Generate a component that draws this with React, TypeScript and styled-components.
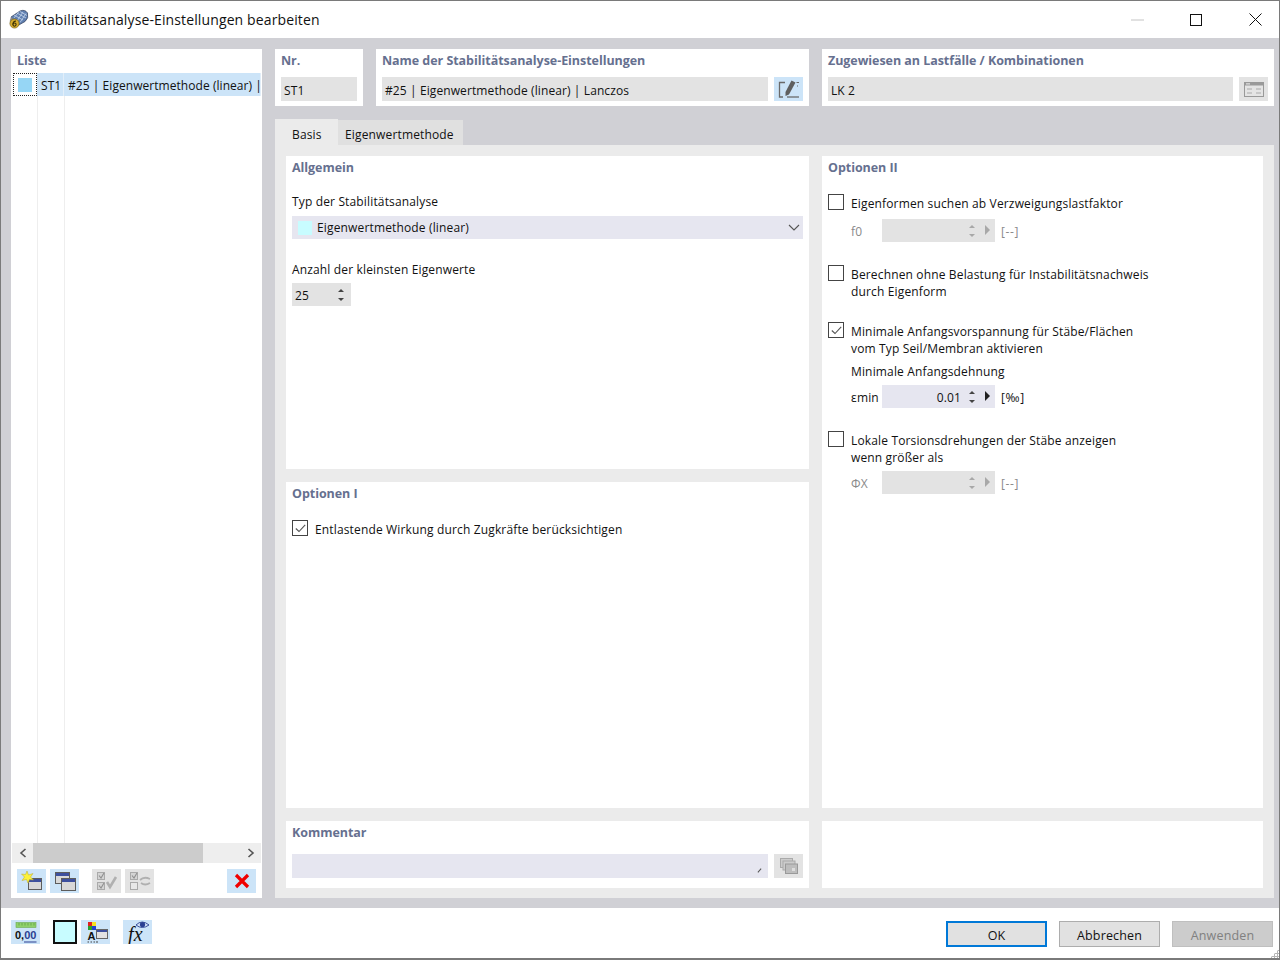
import styled, { createGlobalStyle } from 'styled-components';
import type { ReactNode } from 'react';

const GlobalStyle = createGlobalStyle`
	*, *::before, *::after {
		box-sizing: border-box;
	}
	html, body {
		margin: 0;
		padding: 0;
		background: #fff;
	}
	body {
		font-family: 'Open Sans', 'Noto Sans', sans-serif;
		font-size: 12px;
		letter-spacing: 0.15px;
		color: #1a1a1a;
	}
`;

const AppIcon = () => (
	<svg width="21" height="21" viewBox="0 0 21 21">
		<path d="M3 8 L12 2 Q17 0 19.5 4 Q21 9 17 12.5 L9 17 Z" fill="#5f7fb0" stroke="#3c4a66" strokeWidth="0.8" />
		<path d="M6 6 L15 11 M9 4 L18 9 M12 2.5 L19 6.5 M9 12 L15 3 M12 13.5 L18 4.5 M6 9 L11 2.5" stroke="#c3d3ea" strokeWidth="0.8" />
		<path d="M3 8 Q1 11 2 15 L9 17 Q8 12 3 8 Z" fill="#8d8d8d" />
		<circle cx="6.5" cy="14.5" r="4.6" fill="#d6ab2c" stroke="#6d5a12" strokeWidth="0.6" />
		<circle cx="6.5" cy="15.6" r="1.6" fill="none" stroke="#3b3206" strokeWidth="1.1" />
		<path d="M4.9 15.4 Q5 12.2 8 12" fill="none" stroke="#3b3206" strokeWidth="1.1" />
	</svg>
);

const MiniWindow = ({ x, y, w, h }: { x: number; y: number; w: number; h: number }) => (
	<g>
		<rect x={x} y={y} width={w} height={h} fill="#d8d8d8" stroke="#5c5c5c" />
		<rect x={x + 0.5} y={y + 0.5} width={w - 1} height="3" fill="#3c4f9e" />
	</g>
);

const NewIcon = () => (
	<svg width="22" height="20" viewBox="0 0 22 20">
		<MiniWindow x={7.5} y={7.5} w={13} h={11} />
		<path d="M6 0 L7.5 4 L12 2.5 L9.5 6 L12.5 9 L8.5 8.5 L7 12 L5.5 8.5 L1 9.5 L3.5 6 L0.5 3 L4.5 3.5 Z" fill="#fdf23a" stroke="#b9a92a" strokeWidth="0.5" />
	</svg>
);

const CopyIcon = () => (
	<svg width="22" height="20" viewBox="0 0 22 20">
		<MiniWindow x={1.5} y={1.5} w={14} h={11} />
		<MiniWindow x={7.5} y={7.5} w={14} h={12} />
	</svg>
);

const CheckAllIcon = () => (
	<svg width="22" height="20" viewBox="0 0 22 20" fill="none">
		<rect x="1.5" y="1.5" width="7" height="7" fill="#d4d4d4" stroke="#aaa" />
		<rect x="1.5" y="11.5" width="7" height="7" fill="#d4d4d4" stroke="#aaa" />
		<path d="M3 4.5 L5 7 L8 2 M3 14.5 L5 17 L8 12" stroke="#8f8f8f" strokeWidth="1.1" />
		<path d="M11 11 L14 16 L20 6" stroke="#b0b0b0" strokeWidth="2.6" />
	</svg>
);

const SwapCheckIcon = () => (
	<svg width="22" height="20" viewBox="0 0 22 20" fill="none">
		<rect x="1.5" y="1.5" width="7" height="7" fill="#d4d4d4" stroke="#aaa" />
		<rect x="1.5" y="11.5" width="7" height="7" fill="#e8e8e8" stroke="#aaa" />
		<path d="M3 4.5 L5 7 L8 2" stroke="#8f8f8f" strokeWidth="1.1" />
		<path d="M11 9 Q15 5 21 8 M21 12 Q16 15 12 12" stroke="#b0b0b0" strokeWidth="1.8" />
	</svg>
);

const DeleteIcon = () => (
	<svg width="16" height="16" viewBox="0 0 16 16">
		<path d="M2 2 L14 14 M14 2 L2 14" stroke="#f00000" strokeWidth="3.2" />
	</svg>
);

const EditIcon = () => (
	<svg width="22" height="20" viewBox="0 0 22 20" fill="none">
		<path d="M7 3.5 H1.5 V18 H5" stroke="#6a6a6a" strokeWidth="1.3" />
		<path d="M9 18 H21" stroke="#6a6a6a" strokeWidth="1.3" />
		<path d="M13.5 1.5 L17.5 3.5 L11 15.5 L7.5 17 L7.5 13 Z" fill="#5f5f5f" />
		<path d="M18.5 3.5 H21 M19 7 H20" stroke="#6a6a6a" strokeWidth="1" />
	</svg>
);

const FormIcon = () => (
	<svg width="20" height="15" viewBox="0 0 20 15">
		<rect x="0.5" y="0.5" width="19" height="14" fill="#e4e4e4" stroke="#999" />
		<rect x="1" y="1" width="18" height="2.5" fill="#9a9a9a" />
		<rect x="2" y="1.4" width="4" height="1" fill="#eee" />
		<path d="M3 7 H8 M12 7 H17 M3 11 H8 M12 11 H17" stroke="#aaa" strokeWidth="1" />
	</svg>
);

const CascadeIcon = () => (
	<svg width="18" height="16" viewBox="0 0 18 16">
		<rect x="0.5" y="0.5" width="12" height="9" fill="#ccc" stroke="#aaa" />
		<rect x="3" y="3" width="12" height="9" fill="#ccc" stroke="#aaa" />
		<rect x="5.5" y="6" width="12" height="9.5" fill="#bdbdbd" stroke="#999" />
		<rect x="12" y="10" width="3" height="3" fill="#ddd" />
	</svg>
);

const DecimalIcon = () => (
	<svg width="22" height="21" viewBox="0 0 22 21">
		<rect x="1" y="0.5" width="20" height="5" fill="#8fd16a" stroke="#6aa84f" strokeWidth="0.6" />
		<path d="M4 1 V3.5 M7 1 V3.5 M10 1 V3.5 M13 1 V3.5 M16 1 V3.5 M19 1 V3.5" stroke="#5a9a40" strokeWidth="0.7" />
		<text x="0" y="17" fontSize="11" fontWeight="700" letterSpacing="0" fill="#111" fontFamily="Liberation Sans, sans-serif">0,</text>
		<text x="9.2" y="17" fontSize="11" fontWeight="700" letterSpacing="0" fill="#2a3f92" fontFamily="Liberation Sans, sans-serif">00</text>
		<path d="M9 20 H21.5" stroke="#2a3f92" strokeWidth="1" />
	</svg>
);

const ColorLabelIcon = () => (
	<svg width="24" height="21" viewBox="0 0 24 21">
		<rect x="4" y="0" width="4" height="4" fill="#e02020" />
		<rect x="8" y="0" width="4" height="4" fill="#f5e020" />
		<rect x="4" y="4" width="4" height="4" fill="#2aa02a" />
		<rect x="8" y="4" width="4" height="4" fill="#2040d0" />
		<text x="3.5" y="18" fontSize="11" fontWeight="700" fill="#111" fontFamily="Liberation Sans, sans-serif">A</text>
		<path d="M3.5 20 H5 M6.5 20 H8 M9.5 20 H11 M12 20 H14" stroke="#444" strokeWidth="1.2" />
		<rect x="12.5" y="7.5" width="11" height="9" fill="#e2e2e2" stroke="#666" />
		<rect x="13" y="8" width="10" height="2" fill="#3c4f9e" />
	</svg>
);

const FormulaIcon = () => (
	<svg width="26" height="24" viewBox="0 0 26 24">
		<text x="3" y="21" fontSize="20" fontStyle="italic" fill="#111" fontFamily="Liberation Serif, serif">fx</text>
		<path d="M11 5 Q17 -1 24 5 Q17 10 11 5 Z" fill="#cfe0f5" stroke="#2a3f92" strokeWidth="0.9" />
		<circle cx="17.5" cy="4.5" r="2.6" fill="#2a3f92" />
	</svg>
);

const Window = styled.div`
	position: relative;
	width: 1280px;
	height: 960px;
	display: flex;
	flex-direction: column;
	background: #fff;
	border: 1px solid #7a7a7a;
	border-bottom-width: 2px;
`;

const TitleBar = styled.div`
	height: 37px;
	flex: none;
	display: flex;
	align-items: center;
	padding-left: 7px;
	gap: 5px;
`;

const TitleText = styled.div`
	flex: 1;
	font-size: 14px;
	letter-spacing: 0.12px;
	color: #111;
`;

const WindowButtons = styled.div`
	display: flex;
	align-items: center;
	gap: 45px;
	padding-right: 17px;
`;

const WindowButton = styled.div`
	width: 14px;
	display: flex;
	justify-content: center;
`;

const Main = styled.div`
	flex: 1;
	min-height: 0;
	background: #d0d0d5;
	display: grid;
	grid-template-columns: 251px 999px;
	column-gap: 13px;
	padding: 11px 0 10px 10px;
`;

const ListPanel = styled.div`
	background: #fff;
	display: flex;
	flex-direction: column;
	min-height: 0;
`;

const Heading = styled.div`
	font-weight: 700;
	font-size: 12.5px;
	letter-spacing: -0.05px;
	line-height: 17px;
	color: #66708f;
`;

const ListHeading = styled(Heading)`
	padding: 3px 6px 4px;
`;

const TreeArea = styled.div`
	flex: 1;
	min-height: 0;
	margin-left: 2px;
	background:
		linear-gradient(#eeeeee, #eeeeee) 24px 0 / 1px 100% no-repeat,
		linear-gradient(#eeeeee, #eeeeee) 51px 0 / 1px 100% no-repeat;
`;

const TreeRow = styled.div`
	height: 23px;
	display: flex;
	align-items: center;
	overflow: hidden;
	white-space: nowrap;
`;

const FocusCell = styled.div`
	width: 24px;
	height: 23px;
	flex: none;
	display: flex;
	align-items: center;
	justify-content: center;
	border: 1px dotted #222;
`;

const Swatch = styled.div<{ $color: string }>`
	width: 14px;
	height: 14px;
	flex: none;
	background: ${p => p.$color};
`;

const TreeCell = styled.div<{ $width: number }>`
	width: ${p => p.$width}px;
	flex: none;
	height: 23px;
	display: flex;
	align-items: center;
	padding: 2px 0 0 4px;
	background: #cce4f8;
	border-right: 1px solid #e2eef9;
	letter-spacing: 0.05px;
	overflow: hidden;
	color: #111;
`;

const ScrollBar = styled.div`
	height: 20px;
	margin: 0 1px;
	display: flex;
	align-items: center;
	background: #eeeeee;
`;

const ScrollArrow = styled.div`
	width: 21px;
	flex: none;
	display: flex;
	justify-content: center;
`;

const ScrollThumb = styled.div`
	width: 170px;
	height: 20px;
	background: #cccccc;
`;

const ScrollRest = styled.div`
	flex: 1;
`;

const ListToolbar = styled.div`
	display: flex;
	align-items: center;
	gap: 4px;
	padding: 6px 6px 5px;
`;

const ToolButton = styled.div<{ $disabled?: boolean; $gapLeft?: number }>`
	width: 29px;
	height: 24px;
	flex: none;
	display: flex;
	align-items: center;
	justify-content: center;
	background: ${p => (p.$disabled ? '#e3e3e3' : '#cce4f8')};
	margin-left: ${p => p.$gapLeft ?? 0}px;
`;

const RightColumn = styled.div`
	display: flex;
	flex-direction: column;
	min-height: 0;
`;

const HeaderRow = styled.div`
	display: grid;
	grid-template-columns: 88px 433px 452px;
	column-gap: 13px;
	height: 57px;
	margin-bottom: 13px;
`;

const HeaderCard = styled.div`
	background: #fff;
	padding: 3px 6px 0;
`;

const HeaderFields = styled.div`
	display: flex;
	gap: 6px;
	margin-top: 8px;
`;

const Field = styled.div<{ $tone?: 'gray' | 'lilac' }>`
	flex: 1;
	height: 24px;
	display: flex;
	align-items: center;
	padding: 2px 0 0 3px;
	background: ${p => (p.$tone === 'lilac' ? '#e6e6f0' : '#e3e3e3')};
	color: #111;
	position: relative;
	letter-spacing: 0.1px;
	white-space: nowrap;
`;

const TabBar = styled.div`
	display: flex;
	height: 26px;
	flex: none;
`;

const Tab = styled.div<{ $active?: boolean }>`
	width: ${p => (p.$active ? '63px' : '125px')};
	height: ${p => (p.$active ? '26px' : '25px')};
	margin-top: ${p => (p.$active ? '0' : '1px')};
	display: flex;
	align-items: center;
	padding: ${p => (p.$active ? '4px' : '3px')} 0 0 ${p => (p.$active ? '17px' : '7px')};
	background: ${p => (p.$active ? '#ebebeb' : '#e0e0e0')};
	color: #111;
`;

const TabBody = styled.div`
	flex: 1;
	min-height: 0;
	background: #ebebeb;
	padding: 11px;
	display: grid;
	grid-template-columns: 523px 441px;
	grid-template-rows: 313px 326px 67px;
	gap: 13px;
`;

const Card = styled.div<{ $span?: number }>`
	background: #fff;
	padding: 3px 6px;
	grid-row: ${p => (p.$span ? `span ${p.$span}` : 'auto')};
`;

const FieldLabel = styled.div<{ $top: number; $bottom: number }>`
	margin: ${p => p.$top}px 0 ${p => p.$bottom}px;
	line-height: 17px;
	color: #111;
`;

const Select = styled.div`
	height: 23px;
	display: flex;
	align-items: center;
	background: #e6e6f0;
	padding: 0 3px 0 6px;
	color: #111;
`;

const SelectText = styled.div`
	flex: 1;
	margin-left: 5px;
`;

const Spin = styled.div<{ $width: number; $lilac?: boolean }>`
	width: ${p => p.$width}px;
	height: 23px;
	flex: none;
	display: flex;
	align-items: center;
	padding: 1px 5px 0 3px;
	background: ${p => (p.$lilac ? '#e6e6f0' : '#e3e3e3')};
	color: #111;
`;

const SpinValue = styled.div<{ $right?: boolean }>`
	flex: 1;
	text-align: ${p => (p.$right ? 'right' : 'left')};
	padding-right: ${p => (p.$right ? '8px' : '0')};
`;

const SpinArrows = styled.div`
	display: flex;
	flex-direction: column;
	gap: 6px;
	margin-right: 2px;
`;

const ArrowUp = styled.div<{ $dim?: boolean }>`
	width: 0;
	height: 0;
	border-left: 3px solid transparent;
	border-right: 3px solid transparent;
	border-bottom: 3px solid ${p => (p.$dim ? '#a8a8a8' : '#444')};
`;

const ArrowDown = styled.div<{ $dim?: boolean }>`
	width: 0;
	height: 0;
	border-left: 3px solid transparent;
	border-right: 3px solid transparent;
	border-top: 3px solid ${p => (p.$dim ? '#a8a8a8' : '#444')};
`;

const ArrowRight = styled.div<{ $dim?: boolean }>`
	width: 0;
	height: 0;
	margin: -2px 0 0 8px;
	border-top: 5px solid transparent;
	border-bottom: 5px solid transparent;
	border-left: 5px solid ${p => (p.$dim ? '#a8a8a8' : '#222')};
`;

const CheckRow = styled.div<{ $top: number }>`
	display: flex;
	align-items: flex-start;
	gap: 7px;
	margin-top: ${p => p.$top}px;
	line-height: 17px;
	color: #111;
`;

const CheckText = styled.div`
	padding-top: 1px;
`;

const Box = styled.div`
	width: 16px;
	height: 16px;
	flex: none;
	border: 1px solid #444;
	background: #fff;
	display: flex;
	align-items: center;
	justify-content: center;
`;

const ParamRow = styled.div<{ $top: number }>`
	display: flex;
	align-items: center;
	margin: ${p => p.$top}px 0 0 23px;
	height: 23px;
`;

const ParamName = styled.div<{ $dim?: boolean }>`
	width: 31px;
	flex: none;
	padding-top: 2px;
	color: ${p => (p.$dim ? '#8a8a8a' : '#111')};
`;

const Unit = styled.div<{ $dim?: boolean }>`
	margin-left: 6px;
	padding-top: 2px;
	letter-spacing: 0.6px;
	color: ${p => (p.$dim ? '#8a8a8a' : '#111')};
`;

const Indented = styled.div`
	margin: 6px 0 0 23px;
	line-height: 17px;
	color: #111;
`;

const CommentRow = styled.div`
	display: flex;
	gap: 6px;
	margin-top: 13px;
`;

const ResizeMark = styled.div`
	position: absolute;
	right: 6px;
	bottom: 7px;
	width: 5px;
	height: 1px;
	background: #555;
	transform: rotate(-50deg);
`;

const Footer = styled.div`
	height: 50px;
	flex: none;
	display: flex;
	align-items: flex-start;
	padding: 12px 6px 0 10px;
`;

const FooterSwatch = styled.div`
	width: 24px;
	height: 24px;
	flex: none;
	margin: 0 4px 0 13px;
	background: #c8fcff;
	border: 2px solid #111;
`;

const FooterSpacer = styled.div`
	flex: 1;
`;

const DialogButton = styled.div<{ $kind?: 'primary' | 'disabled' }>`
	width: 101px;
	height: 26px;
	margin: 1px 0 0 12px;
	display: flex;
	align-items: center;
	justify-content: center;
	padding-top: 2px;
	font-size: 12.5px;
	background: ${p => (p.$kind === 'disabled' ? '#cccccc' : '#e1e1e1')};
	color: ${p => (p.$kind === 'disabled' ? '#808080' : '#111')};
	border: ${p => (p.$kind === 'primary' ? '2px solid #0078d7' : `1px solid ${p.$kind === 'disabled' ? '#bfbfbf' : '#adadad'}`)};
`;

const Grip = styled.div`
	position: absolute;
	right: 0;
	bottom: 0;
	width: 9px;
	height: 9px;
	background-image: radial-gradient(#b5b5b5 1px, transparent 1.2px);
	background-size: 3px 3px;
	clip-path: polygon(100% 0, 100% 100%, 0 100%);
`;

const Checkbox = ({ checked }: { checked?: boolean }) => (
	<Box>
		{checked && (
			<svg width="11" height="9" viewBox="0 0 11 9" fill="none">
				<path d="M0.8 4.5 L4 7.5 L10.2 0.8" stroke="#555" strokeWidth="1.1" />
			</svg>
		)}
	</Box>
);

const SpinField = ({
	width,
	value,
	dim,
	lilac,
	right,
	more,
}: {
	width: number;
	value?: ReactNode;
	dim?: boolean;
	lilac?: boolean;
	right?: boolean;
	more?: boolean;
}) => (
	<Spin $width={width} $lilac={lilac}>
		<SpinValue $right={right}>{value}</SpinValue>
		<SpinArrows>
			<ArrowUp $dim={dim} />
			<ArrowDown $dim={dim} />
		</SpinArrows>
		{more && <ArrowRight $dim={dim} />}
	</Spin>
);

export default function App() {
	return (
		<>
			<GlobalStyle />
			<Window>
				<TitleBar>
					<AppIcon />
					<TitleText>Stabilitätsanalyse-Einstellungen bearbeiten</TitleText>
					<WindowButtons>
						<WindowButton>
							<svg width="13" height="2" viewBox="0 0 13 2">
								<path d="M0 1 H13" stroke="#c4c4c4" />
							</svg>
						</WindowButton>
						<WindowButton>
							<svg width="12" height="12" viewBox="0 0 12 12">
								<rect x="0.5" y="0.5" width="11" height="11" fill="none" stroke="#111" />
							</svg>
						</WindowButton>
						<WindowButton>
							<svg width="13" height="13" viewBox="0 0 13 13">
								<path d="M0.5 0.5 L12.5 12.5 M12.5 0.5 L0.5 12.5" stroke="#111" />
							</svg>
						</WindowButton>
					</WindowButtons>
				</TitleBar>
				<Main>
					<ListPanel>
						<ListHeading>Liste</ListHeading>
						<TreeArea>
							<TreeRow>
								<FocusCell>
									<Swatch $color="#96d6f5" />
								</FocusCell>
								<TreeCell $width={27}>ST1</TreeCell>
								<TreeCell $width={197}>#25 | Eigenwertmethode (linear) |</TreeCell>
							</TreeRow>
						</TreeArea>
						<ScrollBar>
							<ScrollArrow>
								<svg width="8" height="10" viewBox="0 0 8 10" fill="none">
									<path d="M6.5 1 L2 5 L6.5 9" stroke="#555" strokeWidth="1.6" />
								</svg>
							</ScrollArrow>
							<ScrollThumb />
							<ScrollRest />
							<ScrollArrow>
								<svg width="8" height="10" viewBox="0 0 8 10" fill="none">
									<path d="M1.5 1 L6 5 L1.5 9" stroke="#555" strokeWidth="1.6" />
								</svg>
							</ScrollArrow>
						</ScrollBar>
						<ListToolbar>
							<ToolButton><NewIcon /></ToolButton>
							<ToolButton><CopyIcon /></ToolButton>
							<ToolButton $disabled $gapLeft={9}><CheckAllIcon /></ToolButton>
							<ToolButton $disabled><SwapCheckIcon /></ToolButton>
							<ToolButton $gapLeft={69}><DeleteIcon /></ToolButton>
						</ListToolbar>
					</ListPanel>
					<RightColumn>
						<HeaderRow>
							<HeaderCard>
								<Heading>Nr.</Heading>
								<HeaderFields>
									<Field>ST1</Field>
								</HeaderFields>
							</HeaderCard>
							<HeaderCard>
								<Heading>Name der Stabilitätsanalyse-Einstellungen</Heading>
								<HeaderFields>
									<Field>#25 | Eigenwertmethode (linear) | Lanczos</Field>
									<ToolButton><EditIcon /></ToolButton>
								</HeaderFields>
							</HeaderCard>
							<HeaderCard>
								<Heading>Zugewiesen an Lastfälle / Kombinationen</Heading>
								<HeaderFields>
									<Field>LK 2</Field>
									<ToolButton $disabled><FormIcon /></ToolButton>
								</HeaderFields>
							</HeaderCard>
						</HeaderRow>
						<TabBar>
							<Tab $active>Basis</Tab>
							<Tab>Eigenwertmethode</Tab>
						</TabBar>
						<TabBody>
							<Card>
								<Heading>Allgemein</Heading>
								<FieldLabel $top={17} $bottom={6}>Typ der Stabilitätsanalyse</FieldLabel>
								<Select>
									<Swatch $color="#c8fcff" />
									<SelectText>Eigenwertmethode (linear)</SelectText>
									<svg width="12" height="7" viewBox="0 0 12 7" fill="none">
										<path d="M1 1 L6 6 L11 1" stroke="#555" strokeWidth="1.1" />
									</svg>
								</Select>
								<FieldLabel $top={22} $bottom={5}>Anzahl der kleinsten Eigenwerte</FieldLabel>
								<SpinField width={59} value="25" />
							</Card>
							<Card $span={2}>
								<Heading>Optionen II</Heading>
								<CheckRow $top={18}>
									<Checkbox />
									<CheckText>Eigenformen suchen ab Verzweigungslastfaktor</CheckText>
								</CheckRow>
								<ParamRow $top={7}>
									<ParamName $dim>f0</ParamName>
									<SpinField width={113} dim more />
									<Unit $dim>[--]</Unit>
								</ParamRow>
								<CheckRow $top={23}>
									<Checkbox />
									<CheckText>
										Berechnen ohne Belastung für Instabilitätsnachweis
										<br />
										durch Eigenform
									</CheckText>
								</CheckRow>
								<CheckRow $top={22}>
									<Checkbox checked />
									<CheckText>
										Minimale Anfangsvorspannung für Stäbe/Flächen
										<br />
										vom Typ Seil/Membran aktivieren
									</CheckText>
								</CheckRow>
								<Indented>Minimale Anfangsdehnung</Indented>
								<ParamRow $top={5}>
									<ParamName>εmin</ParamName>
									<SpinField width={113} value="0.01" lilac right more />
									<Unit>[‰]</Unit>
								</ParamRow>
								<CheckRow $top={23}>
									<Checkbox />
									<CheckText>
										Lokale Torsionsdrehungen der Stäbe anzeigen
										<br />
										wenn größer als
									</CheckText>
								</CheckRow>
								<ParamRow $top={5}>
									<ParamName $dim>ΦX</ParamName>
									<SpinField width={113} dim more />
									<Unit $dim>[--]</Unit>
								</ParamRow>
							</Card>
							<Card>
								<Heading>Optionen I</Heading>
								<CheckRow $top={18}>
									<Checkbox checked />
									<CheckText>Entlastende Wirkung durch Zugkräfte berücksichtigen</CheckText>
								</CheckRow>
							</Card>
							<Card>
								<Heading>Kommentar</Heading>
								<CommentRow>
									<Field $tone="lilac">
										<ResizeMark />
									</Field>
									<ToolButton $disabled><CascadeIcon /></ToolButton>
								</CommentRow>
							</Card>
							<Card />
						</TabBody>
					</RightColumn>
				</Main>
				<Footer>
					<ToolButton><DecimalIcon /></ToolButton>
					<FooterSwatch />
					<ToolButton><ColorLabelIcon /></ToolButton>
					<ToolButton $gapLeft={13}><FormulaIcon /></ToolButton>
					<FooterSpacer />
					<DialogButton $kind="primary">OK</DialogButton>
					<DialogButton>Abbrechen</DialogButton>
					<DialogButton $kind="disabled">Anwenden</DialogButton>
				</Footer>
				<Grip />
			</Window>
		</>
	);
}
